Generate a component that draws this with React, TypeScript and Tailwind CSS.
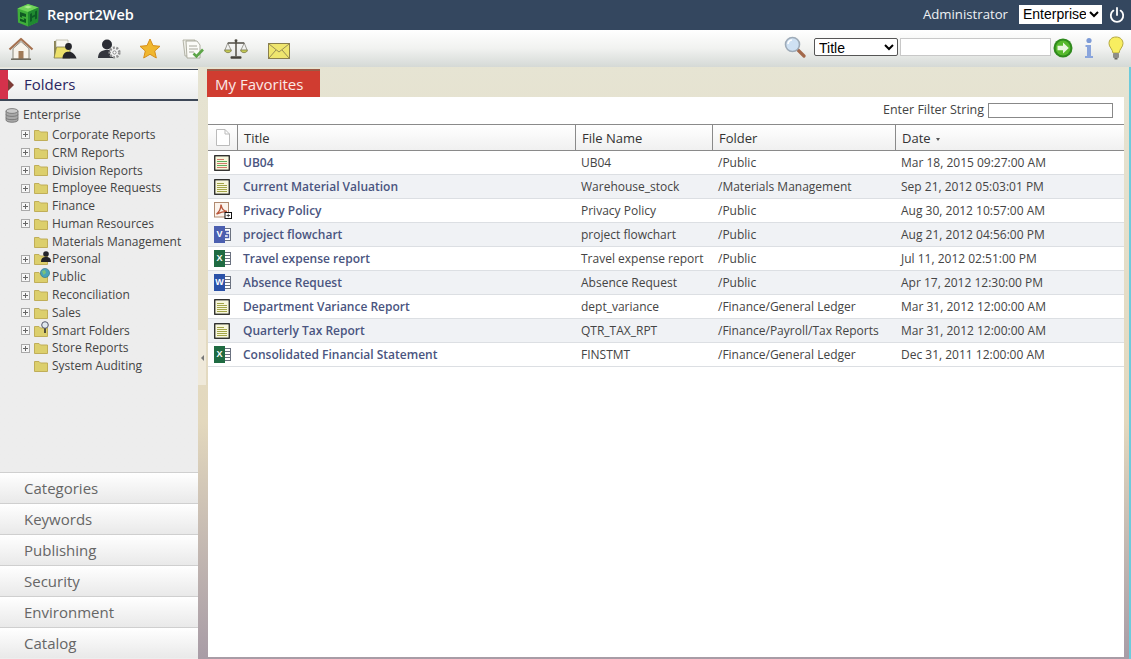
import React from "react";

const font = { fontFamily: '"Open Sans", sans-serif' };

function Logo() {
  return (
    <svg width="24" height="24" viewBox="0 0 24 24">
      <path d="M1.5 5.5 L12 1 L22.5 4.5 L22 19 L12 23.5 L2 19.5 Z" fill="#3faf3a" />
      <path d="M1.5 5.5 L12 1 L22.5 4.5 L12 9 Z" fill="#6fd35a" />
      <path d="M12 9 L22.5 4.5 L22 19 L12 23.5 Z" fill="#1f8a30" />
      <path d="M4 9 L10 11 V14 L6 13 V14.5 L10 16 V20 L4 18 V15.5 L8 17 V15.5 L4 14 Z" fill="#0f5a22" />
      <path d="M14 11 l2 -1 v3 l3 -1.5 v-3 l2 -1 v8 l-2 1 v-3 l-3 1.5 v3 l-2 1 Z" fill="#0d5d25" />
      <path d="M8 4 L12 2.5 L16 4 L12 5.5 Z" fill="#a9ec8b" />
    </svg>
  );
}

function HomeIcon() {
  return (
    <svg width="26" height="24" viewBox="0 0 26 24">
      <path d="M1.5 12.5 L13 2 L24.5 12.5" fill="none" stroke="#a5714f" strokeWidth="2.2" strokeLinejoin="round" />
      <path d="M5 11.5 L13 4.5 L21 11.5 V22 H5 Z" fill="#f7f3ea" stroke="#8d8a7c" strokeWidth="1" />
      <rect x="10.5" y="14" width="5" height="8" fill="#a07a56" />
      <rect x="3" y="21.5" width="20" height="1.5" fill="#6f6b5f" />
    </svg>
  );
}
function FolderUserIcon() {
  return (
    <svg width="24" height="22" viewBox="0 0 24 22">
      <path d="M1 3 h7 l2 2 h7 v15 H1 Z" fill="#8b8455" />
      <path d="M3 2 h12 v8 H3 Z" fill="#faf9f0" stroke="#a3a088" strokeWidth=".6" />
      <path d="M1 20 L3.5 9 H17 V20 Z" fill="#ece06a" stroke="#7d7a4d" strokeWidth=".8" />
      <circle cx="15.5" cy="8.5" r="3.4" fill="#25262b" />
      <path d="M9.5 20.5 c0-5 3-6.8 6-6.8 S22 15.5 23.5 20.5 Z" fill="#25262b" />
    </svg>
  );
}
function UserGearIcon() {
  return (
    <svg width="24" height="22" viewBox="0 0 24 22">
      <circle cx="10" cy="6.5" r="5" fill="#2a2c33" />
      <path d="M1 20 c0-6 4-8 9-8 s7 2 8 8 Z" fill="#34363d" />
      <circle cx="17.5" cy="14.5" r="4.8" fill="#f4f4f4" stroke="#929292" strokeWidth="2.6" strokeDasharray="2 1.4" />
      <circle cx="17.5" cy="14.5" r="1.6" fill="#fff" stroke="#888" />
    </svg>
  );
}
function StarIcon() {
  return (
    <svg width="22" height="21" viewBox="0 0 22 21">
      <path d="M11 1 L14 7.6 L21 8.3 L15.7 13 L17.3 20 L11 16.3 L4.7 20 L6.3 13 L1 8.3 L8 7.6 Z" fill="#f0b72f" stroke="#d68f1c" strokeWidth="1" strokeLinejoin="round" />
    </svg>
  );
}
function ReportCheckIcon() {
  return (
    <svg width="23" height="22" viewBox="0 0 23 22">
      <path d="M1 2 h12 l0 16 H3 Z" fill="#efefe8" stroke="#a5a596" strokeWidth=".8" />
      <path d="M4 3 h11 l3 4 v13 H5 Z" fill="#fbfbf7" stroke="#9d9d8e" strokeWidth=".8" />
      <path d="M7 8 h8 M7 11 h9 M7 14 h5" stroke="#a6a69a" strokeWidth="1" />
      <path d="M11.5 15.5 l3 3 L21 11.5" fill="none" stroke="#5da548" strokeWidth="2.6" />
    </svg>
  );
}
function ScalesIcon() {
  return (
    <svg width="24" height="22" viewBox="0 0 26 24">
      <path d="M13 3 V20 M4 5.5 H22" stroke="#4f4c43" strokeWidth="1.6" />
      <circle cx="13" cy="3" r="1.6" fill="#4f4c43" />
      <path d="M4 5.5 L1 13 M4 5.5 L7.5 13 M22 5.5 L18.5 13 M22 5.5 L25 13" stroke="#6a675c" strokeWidth=".7" />
      <path d="M.5 13 H8 C8 17 .5 17 .5 13 Z M18 13 H25.5 C25.5 17 18 17 18 13 Z" fill="#c6cc55" stroke="#66643f" strokeWidth=".7" />
      <rect x="7" y="20" width="12" height="2.6" rx="1" fill="#45433b" />
    </svg>
  );
}
function MailIcon() {
  return (
    <svg width="22" height="16" viewBox="0 0 22 16">
      <rect x=".5" y=".5" width="21" height="15" fill="#efe66e" stroke="#8a7f4d" />
      <path d="M1 1 L11 9 L21 1 M1 15 L8 7 M21 15 L14 7" fill="none" stroke="#9a8f55" strokeWidth="1" />
    </svg>
  );
}
function SearchIcon() {
  return (
    <svg width="22" height="22" viewBox="0 0 22 22">
      <path d="M13 13 L20 20" stroke="#a3684a" strokeWidth="3.2" strokeLinecap="round" />
      <circle cx="8.5" cy="8.5" r="7" fill="#cfe1f3" stroke="#9eabb8" strokeWidth="1.6" />
      <path d="M4 8 a4.5 4.5 0 0 1 4-4" stroke="#fff" strokeWidth="1.6" fill="none" />
    </svg>
  );
}
function GoIcon() {
  return (
    <svg width="20" height="20" viewBox="0 0 20 20">
      <circle cx="10" cy="10" r="9.5" fill="#2f8a1d" />
      <circle cx="10" cy="10" r="7.4" fill="#56b92c" />
      <path d="M4.5 7.8 H10 V4.5 L15.8 10 L10 15.5 V12.2 H4.5 Z" fill="#e9f6de" />
    </svg>
  );
}
function InfoIcon() {
  return (
    <svg width="10" height="22" viewBox="0 0 10 22">
      <circle cx="5" cy="3.5" r="2.6" fill="#7d9bd6" />
      <path d="M1.5 8 H7 V19 H9 V21 H1 V19 H3 V10 H1.5 Z" fill="#8aa5dc" />
    </svg>
  );
}
function BulbIcon() {
  return (
    <svg width="16" height="24" viewBox="0 0 16 24">
      <path d="M8 1 C3.5 1 1 4 1 7.5 C1 11 4.5 13 5 17 H11 C11.5 13 15 11 15 7.5 C15 4 12.5 1 8 1 Z" fill="#f8ee60" stroke="#b5a93f" />
      <rect x="5" y="17" width="6" height="5" rx="1" fill="#8d8d88" />
      <rect x="6.5" y="22" width="3" height="1.5" fill="#66665f" />
    </svg>
  );
}
function PowerIcon() {
  return (
    <svg width="16" height="16" viewBox="0 0 16 16" fill="none" stroke="#fff" strokeWidth="1.8" strokeLinecap="round">
      <path d="M8 1 V8" />
      <path d="M4.4 3.6 A6.2 6.2 0 1 0 11.6 3.6" />
    </svg>
  );
}
function DbIcon() {
  return (
    <svg width="14" height="15" viewBox="0 0 14 15">
      <path d="M1 3 V12 C1 15 13 15 13 12 V3 Z" fill="#a9a9a9" stroke="#6f6f6f" strokeWidth=".8" />
      <ellipse cx="7" cy="3" rx="6" ry="2.4" fill="#c9c9c9" stroke="#6f6f6f" strokeWidth=".8" />
      <path d="M1 6.5 C1 9 13 9 13 6.5 M1 9.8 C1 12.3 13 12.3 13 9.8" fill="none" stroke="#6f6f6f" strokeWidth=".8" />
    </svg>
  );
}
function Folder({ badge }: { badge?: "user" | "globe" | "smart" }) {
  return (
    <span className="relative block w-[14px] h-[12px]">
      <svg width="14" height="12" viewBox="0 0 14 12" className="block">
        <path d="M.5 1.5 H5 L6.5 3 H13.5 V11.5 H.5 Z" fill="#dccf6c" stroke="#c0ae58" />
      </svg>
      {badge === "user" && (
        <svg width="10" height="11" viewBox="0 0 10 11" className="absolute left-[7px] -top-[2px]">
          <circle cx="5" cy="3" r="2.8" fill="#23242a" />
          <path d="M0 11 C0 7 2 6 5 6 S10 7 10 11 Z" fill="#23242a" />
        </svg>
      )}
      {badge === "globe" && (
        <svg width="10" height="10" viewBox="0 0 10 10" className="absolute left-[6px] -top-[3px]">
          <circle cx="5" cy="5" r="4.6" fill="#4aa3b8" stroke="#2f7184" strokeWidth=".6" />
          <path d="M2 3 L5 2 L6 5 L3.5 7 Z" fill="#7cc27a" />
        </svg>
      )}
      {badge === "smart" && (
        <svg width="10" height="13" viewBox="0 0 10 13" className="absolute left-[6px] -top-[4px]">
          <path d="M5 7 V12" stroke="#2d2d2d" strokeWidth="1.6" />
          <circle cx="5" cy="4" r="3.3" fill="#dfe7ee" stroke="#54586a" strokeWidth="1" />
        </svg>
      )}
    </span>
  );
}
function Plus() {
  return (
    <svg width="9" height="9" viewBox="0 0 9 9" className="block">
      <rect x=".5" y=".5" width="8" height="8" fill="#f6f6f6" stroke="#a8a8a8" />
      <path d="M2 4.5 H7 M4.5 2 V7" stroke="#666" />
    </svg>
  );
}

type Doc = "report" | "reportMixed" | "pdf" | "visio" | "excel" | "word";

function DocIcon({ type }: { type: Doc }) {
  if (type === "report" || type === "reportMixed")
    return (
      <svg width="16" height="16" viewBox="0 0 16 16" className="block">
        <rect x=".75" y=".75" width="14.5" height="14.5" fill="#f8f7dc" stroke="#111" strokeWidth="1.2" />
        <path d="M3 4.5 H10 M3 8.5 H13 M3 12.5 H13" stroke={type === "reportMixed" ? "#d07a6a" : "#a3a548"} />
        <path d="M3 6.5 H13 M3 10.5 H13" stroke={type === "reportMixed" ? "#5fae5f" : "#a3a548"} />
      </svg>
    );
  if (type === "pdf")
    return (
      <svg width="18" height="17" viewBox="0 0 18 17" className="block">
        <rect x=".5" y=".5" width="14" height="14.5" fill="#fbf3ec" stroke="#b08a70" />
        <path d="M2.5 12 C5 10 7 6 7 2.5 C7.5 6 9.5 9 13 9.5 C9.5 9.3 6 10.5 2.5 12 Z" fill="none" stroke="#b9583d" strokeWidth="1.4" />
        <rect x="11" y="10.5" width="6.5" height="6" fill="#fff" stroke="#111" />
        <path d="M12.5 13.5 H16 M14.25 11.8 V15.2" stroke="#333" strokeWidth=".8" />
      </svg>
    );
  const bg = type === "visio" ? "#4b5fb0" : type === "excel" ? "#1f6b42" : "#2b52a8";
  const letter = type === "visio" ? "V" : type === "excel" ? "X" : "W";
  return (
    <span className="relative block w-[17px] h-[17px]">
      <span className="absolute right-0 top-[2px] w-[10px] h-[13px] bg-white border border-[#6b7280]" />
      {type === "visio" ? (
        <svg width="6" height="9" viewBox="0 0 6 9" className="absolute right-[1px] top-[4px]">
          <path d="M5 1.5 H1.5 V4.5 H4.5 V7.5 H1" fill="none" stroke="#4b5fb0" strokeWidth="1.4" />
        </svg>
      ) : (
        <>
          <span className="absolute right-[1px] top-[5px] w-[7px] h-[1px] bg-[#6b7280]" />
          <span className="absolute right-[1px] top-[8px] w-[7px] h-[1px] bg-[#6b7280]" />
          <span className="absolute right-[1px] top-[11px] w-[7px] h-[1px] bg-[#6b7280]" />
        </>
      )}
      <span
        className="absolute left-0 top-0 w-[11px] h-[17px] text-white text-[9px] font-bold leading-[17px] text-center"
        style={{ backgroundColor: bg, fontFamily: '"Liberation Sans", sans-serif' }}
      >
        {letter}
      </span>
    </span>
  );
}

const tree: { name: string; plus: boolean; badge?: "user" | "globe" | "smart" }[] = [
  { name: "Corporate Reports", plus: true },
  { name: "CRM Reports", plus: true },
  { name: "Division Reports", plus: true },
  { name: "Employee Requests", plus: true },
  { name: "Finance", plus: true },
  { name: "Human Resources", plus: true },
  { name: "Materials Management", plus: false },
  { name: "Personal", plus: true, badge: "user" },
  { name: "Public", plus: true, badge: "globe" },
  { name: "Reconciliation", plus: true },
  { name: "Sales", plus: true },
  { name: "Smart Folders", plus: true, badge: "smart" },
  { name: "Store Reports", plus: true },
  { name: "System Auditing", plus: false },
];

const rows: { t: Doc; title: string; file: string; folder: string; date: string }[] = [
  { t: "reportMixed", title: "UB04", file: "UB04", folder: "/Public", date: "Mar 18, 2015 09:27:00 AM" },
  { t: "report", title: "Current Material Valuation", file: "Warehouse_stock", folder: "/Materials Management", date: "Sep 21, 2012 05:03:01 PM" },
  { t: "pdf", title: "Privacy Policy", file: "Privacy Policy", folder: "/Public", date: "Aug 30, 2012 10:57:00 AM" },
  { t: "visio", title: "project flowchart", file: "project flowchart", folder: "/Public", date: "Aug 21, 2012 04:56:00 PM" },
  { t: "excel", title: "Travel expense report", file: "Travel expense report", folder: "/Public", date: "Jul 11, 2012 02:51:00 PM" },
  { t: "word", title: "Absence Request", file: "Absence Request", folder: "/Public", date: "Apr 17, 2012 12:30:00 PM" },
  { t: "report", title: "Department Variance Report", file: "dept_variance", folder: "/Finance/General Ledger", date: "Mar 31, 2012 12:00:00 AM" },
  { t: "report", title: "Quarterly Tax Report", file: "QTR_TAX_RPT", folder: "/Finance/Payroll/Tax Reports", date: "Mar 31, 2012 12:00:00 AM" },
  { t: "excel", title: "Consolidated Financial Statement", file: "FINSTMT", folder: "/Finance/General Ledger", date: "Dec 31, 2011 12:00:00 AM" },
];

const accordion = ["Categories", "Keywords", "Publishing", "Security", "Environment", "Catalog"];

const cols = "grid grid-cols-[30px_338px_137px_183px_1fr]";

export default function App() {
  return (
    <div className="w-[1131px] h-[659px] overflow-hidden flex flex-col bg-white" style={font}>
      <header className="h-[30px] shrink-0 bg-[#34475f] flex items-center text-white">
        <div className="ml-[16px] -mt-[1px]"><Logo /></div>
        <div className="ml-[7px] text-[14.5px] font-semibold leading-none">Report2Web</div>
        <div className="ml-auto text-[13.2px] text-[#eef1f4] leading-none -mt-[1px]">Administrator</div>
        <select
          defaultValue="Enterprise"
          className="ml-[11px] w-[83px] h-[19px] bg-white text-black text-[14px] leading-none border-0 outline-none -mt-[2px]"
          style={{ fontFamily: '"Liberation Sans", sans-serif' }}
        >
          <option>Enterprise</option>
        </select>
        <div className="ml-[7px] mr-[6px] -mt-[1px]"><PowerIcon /></div>
      </header>

      <div className="h-[37px] shrink-0 flex items-center bg-gradient-to-b from-white via-[#f1f2f0] to-[#d5d9d6]">
        <div className="ml-[8px] w-[26px]"><HomeIcon /></div>
        <div className="ml-[19px] w-[24px]"><FolderUserIcon /></div>
        <div className="ml-[20px] w-[24px]"><UserGearIcon /></div>
        <div className="ml-[18px] w-[22px]"><StarIcon /></div>
        <div className="ml-[21px] w-[23px]"><ReportCheckIcon /></div>
        <div className="ml-[19px] w-[24px]"><ScalesIcon /></div>
        <div className="ml-[20px] w-[22px] mt-[5px]"><MailIcon /></div>
        <div className="ml-auto -mt-[4px]"><SearchIcon /></div>
        <select
          defaultValue="Title"
          className="ml-[8px] w-[84px] h-[18px] bg-white text-black text-[14px] leading-none border border-[#555] rounded-[2px] outline-none -mt-[3px]"
          style={{ fontFamily: '"Liberation Sans", sans-serif' }}
        >
          <option>Title</option>
        </select>
        <input className="ml-[2px] w-[151px] h-[18px] bg-white border border-[#c8c8c8] -mt-[3px]" />
        <div className="ml-[2px] -mt-[1px]"><GoIcon /></div>
        <div className="ml-[11px] -mt-[1px]"><InfoIcon /></div>
        <div className="ml-[14px] mr-[7px] -mt-[2px]"><BulbIcon /></div>
      </div>

      <div className="flex-1 flex min-h-0">
        <aside className="w-[198px] shrink-0 flex flex-col bg-gradient-to-b from-[#e3e2d4] from-[0px] to-[#ededed] to-[2px] pt-[2px] pb-[1px]">
          <div className="relative h-[32px] shrink-0 flex items-center pl-[24px] border-t-[1px] border-b-[2px] border-t-[#3d4757] border-b-[#3d4757] bg-gradient-to-b from-white to-[#eceded]">
            <span className="absolute left-0 top-0 bottom-0 w-[8px] bg-[#d4314b]" />
            <span className="absolute left-[8px] top-[9px] w-0 h-0 border-y-[6px] border-y-transparent border-l-[6px] border-l-[#7c3b36]" />
            <span className="text-[15px] text-[#2a2560] leading-none">Folders</span>
          </div>
          <div className="flex-1 pt-[4px]">
            <div className="flex items-center h-[21px] pl-[5px] pb-[1px] text-[12px] text-[#444]">
              <DbIcon />
              <span className="ml-[4px]">Enterprise</span>
            </div>
            {tree.map((n) => (
              <div key={n.name} className="flex items-center h-[17.8px] pl-[21px] text-[12px] text-[#444]">
                <span className="w-[9px]">{n.plus && <Plus />}</span>
                <span className="ml-[4px]"><Folder badge={n.badge} /></span>
                <span className="ml-[4px] whitespace-nowrap">{n.name}</span>
              </div>
            ))}
          </div>
          {accordion.map((a) => (
            <div
              key={a}
              className="h-[31px] shrink-0 flex items-center pl-[24px] border-t border-[#cfcfcf] bg-gradient-to-b from-white to-[#e9e9e9] text-[15px] text-[#666]"
            >
              {a}
            </div>
          ))}
        </aside>

        <main
          className="relative flex-1 flex flex-col pl-[10px] pr-[5px] pt-[2px] pb-[2px] border-r-2 border-[#6ccbdc] bg-gradient-to-b from-[#e6e4d3] from-0% via-[#e3d8bd] via-60% to-[#a89ca6] to-100%"
        >
          <div className="absolute left-0 top-[263px] w-[8px] h-[55px] bg-[#efe9da]" />
          <div className="absolute left-[3px] top-[288px] w-0 h-0 border-y-[3px] border-y-transparent border-r-[3px] border-r-[#777]" />
          <div className="shrink-0 w-[113px] h-[28px] -ml-[1px] flex items-center pl-[8px] bg-[#d03c30] border-t-2 border-[#9a5a45] text-[15px] text-[#fbe9e6] leading-none">
            My Favorites
          </div>
          <div className="flex-1 flex flex-col bg-white min-h-0">
            <div className="h-[27px] shrink-0 flex items-center justify-end pr-[11px] text-[12.5px] text-[#444] font-medium">
              <span>Enter Filter String</span>
              <input className="ml-[4px] w-[125px] h-[15px] bg-white border border-[#888]" />
            </div>
            <div className={`${cols} h-[27px] shrink-0 border-y border-[#8a8a8a] bg-gradient-to-b from-white to-[#f0f0f0] text-[13px] text-[#333]`}>
              <div className="flex items-center pl-[8px] border-r border-[#8a8a8a]">
                <svg width="14" height="17" viewBox="0 0 14 17">
                  <path d="M.5 .5 H9 L13.5 5 V16.5 H.5 Z" fill="#fff" stroke="#bbb" />
                  <path d="M9 .5 V5 H13.5" fill="none" stroke="#bbb" />
                </svg>
              </div>
              <div className="flex items-center pl-[6px] pt-[2px] border-r border-[#8a8a8a]">Title</div>
              <div className="flex items-center pl-[6px] pt-[2px] border-r border-[#8a8a8a]">File Name</div>
              <div className="flex items-center pl-[6px] pt-[2px] border-r border-[#8a8a8a]">Folder</div>
              <div className="flex items-center pl-[6px] pt-[2px]">
                Date
                <span className="ml-[5px] mt-[2px] w-0 h-0 border-x-[2.5px] border-x-transparent border-t-[3px] border-t-[#555]" />
              </div>
            </div>
            {rows.map((r, i) => (
              <div
                key={r.title}
                className={`${cols} h-[24px] shrink-0 items-center border-b border-[#dcdfe3] text-[12px] text-[#444] ${i % 2 ? "bg-[#f0f2f5]" : "bg-white"}`}
              >
                <div className="pl-[6px]"><DocIcon type={r.t} /></div>
                <div className="pl-[5px] font-semibold text-[#4a5580] whitespace-nowrap">{r.title}</div>
                <div className="pl-[5px] whitespace-nowrap">{r.file}</div>
                <div className="pl-[5px] whitespace-nowrap">{r.folder}</div>
                <div className="pl-[5px] whitespace-nowrap">{r.date}</div>
              </div>
            ))}
          </div>
        </main>
      </div>
    </div>
  );
}
